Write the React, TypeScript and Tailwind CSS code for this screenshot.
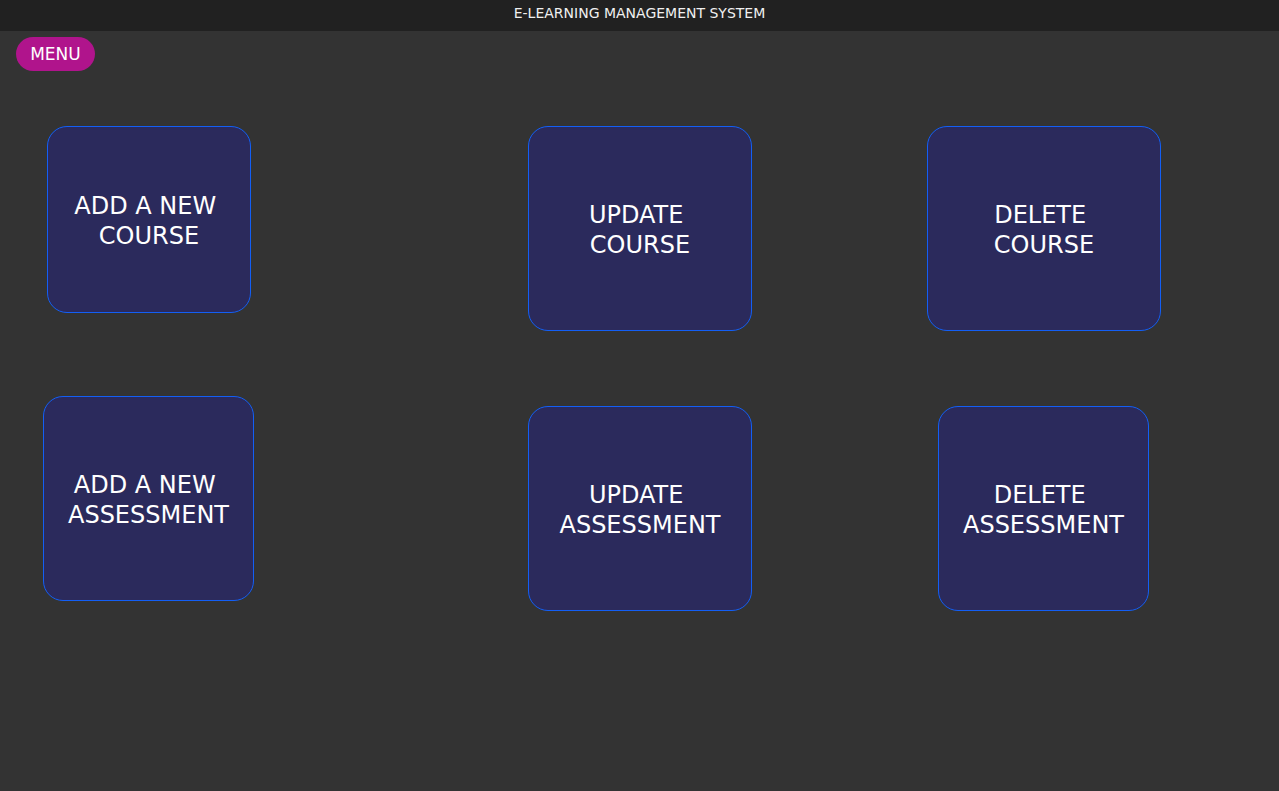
import React from "react";

const font = { fontFamily: '"DejaVu Sans", Verdana, sans-serif' };

function Tile({ lines, className }: { lines: string[]; className: string }) {
  return (
    <button
      className={`flex flex-col items-center justify-center rounded-[20px] border border-[#135ff5] bg-[#2b2a5c] pt-[2px] text-[24px] leading-[30px] text-white ${className}`}
    >
      {lines.map((l, i) => (
        <span key={i} className="whitespace-pre">
          {l}
        </span>
      ))}
    </button>
  );
}

export default function App() {
  return (
    <div className="min-h-[791px] w-full bg-[#333333]" style={font}>
      <header className="flex h-[31px] items-start justify-center bg-[#212121] pt-[4px] text-[14px] leading-[18px] text-[#f0f0f0]">
        E-LEARNING MANAGEMENT SYSTEM
      </header>

      <div className="px-4 pt-[6px]">
        <button className="h-[34px] w-[79px] rounded-full bg-[#b0148c] pt-[1px] text-[17px] text-white">
          MENU
        </button>
      </div>

      {/* course row */}
      <div className="mt-[55px] flex items-start">
        <Tile lines={["ADD A NEW ", "COURSE"]} className="ml-[47px] h-[187px] w-[204px]" />
        <Tile lines={["UPDATE ", "COURSE"]} className="ml-[277px] h-[205px] w-[224px]" />
        <Tile lines={["DELETE ", "COURSE"]} className="ml-[175px] h-[205px] w-[234px]" />
      </div>

      {/* assessment row */}
      <div className="mt-[65px] flex items-start">
        <Tile lines={["ADD A NEW ", "ASSESSMENT"]} className="ml-[43px] h-[205px] w-[211px]" />
        <Tile lines={["UPDATE ", "ASSESSMENT"]} className="ml-[274px] mt-[10px] h-[205px] w-[224px]" />
        <Tile lines={["DELETE ", "ASSESSMENT"]} className="ml-[186px] mt-[10px] h-[205px] w-[211px]" />
      </div>
    </div>
  );
}
